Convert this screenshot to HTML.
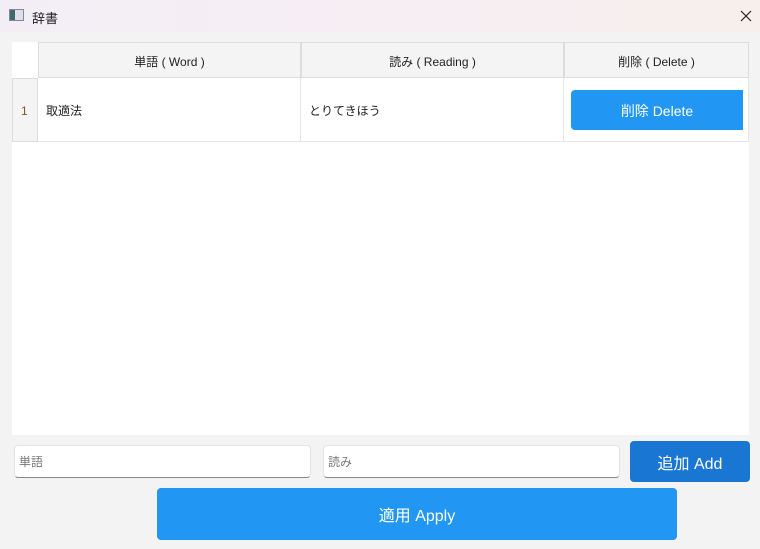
<!DOCTYPE html>
<html><head><meta charset="utf-8"><style>
*{box-sizing:border-box;margin:0;padding:0}
body{width:760px;height:549px;overflow:hidden;background:#f3f3f3;font-family:"Liberation Sans","Noto Sans CJK JP",sans-serif;position:relative;font-size:12px;color:#222}
.title{position:absolute;left:0;top:0;width:760px;height:32px;background:linear-gradient(90deg,#f3eef6,#f6eef3 50%,#f7efec)}
.abs{position:absolute}
.tbl{position:absolute;left:12px;top:42px;width:737px;height:393px;background:#fff}
.hd{position:absolute;top:0;height:36px;padding-top:2px;background:#f4f4f4;border:1px solid #dcdcdc;display:flex;align-items:center;justify-content:center;font-size:12px}
.cell{position:absolute;top:36px;height:64px;padding-top:2px;border-right:1px solid #e6e6e6;border-bottom:1px solid #e6e6e6;display:flex;align-items:center;padding-left:8px;font-size:12px}
.btn{position:absolute;color:#fff;display:flex;align-items:center;justify-content:center;border-radius:4px}
.inp{position:absolute;top:445px;height:33px;background:#fff;border:1px solid #e3e3e3;border-bottom:1px solid #888;border-radius:4px;color:#777;font-size:12px;display:flex;align-items:center;padding-left:4px}
</style></head><body>
<div class="title"></div>
<div class="abs" style="left:9px;top:9px;width:15px;height:12px;border:1px solid #888;background:linear-gradient(90deg,#3a6a70 40%,#dde 40%)"></div>
<div class="abs" style="left:32px;top:8px;font-size:13px">辞書</div>
<svg class="abs" style="left:740px;top:10px" width="12" height="12"><path d="M1 1L11 11M11 1L1 11" stroke="#222" stroke-width="1.2"/></svg>
<div class="tbl">
 <div class="hd" style="left:26px;width:263px">単語 ( Word )</div>
 <div class="hd" style="left:289px;width:263px">読み ( Reading )</div>
 <div class="hd" style="left:552px;width:185px">削除 ( Delete )</div>
 <div class="cell" style="left:0;width:26px;background:#f4f4f4;border:1px solid #dcdcdc;color:#7a5a20">1</div>
 <div class="cell" style="left:26px;width:263px">取適法</div>
 <div class="cell" style="left:289px;width:263px">とりてきほう</div>
 <div class="cell" style="left:552px;width:185px"></div>
</div>
<div class="btn" style="left:571px;top:90px;width:172px;height:40px;background:#2196f3;font-size:14px;border-radius:4px 0 0 4px;padding-top:2px">削除 Delete</div>
<div class="inp" style="left:14px;width:297px">単語</div>
<div class="inp" style="left:323px;width:297px">読み</div>
<div class="btn" style="left:630px;top:441px;width:120px;height:41px;background:#1976d2;font-size:16px">追加 Add</div>
<div class="btn" style="left:157px;top:488px;width:520px;height:52px;background:#2196f3;font-size:16px">適用 Apply</div>
</body></html>
